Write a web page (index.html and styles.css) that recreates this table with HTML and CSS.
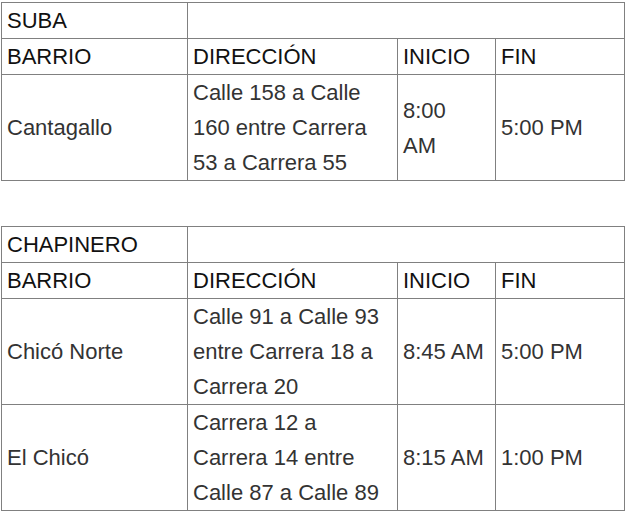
FILE: index.html
```html
<!DOCTYPE html>
<html lang="es">
<head>
<meta charset="utf-8">
<title>Horarios</title>
<link rel="stylesheet" href="styles.css">
</head>
<body>
<div class="page">
  <table class="sched">
    <colgroup><col class="c1"><col class="c2"><col class="c3"><col class="c4"></colgroup>
    <tr class="head"><td>SUBA</td><td colspan="3"></td></tr>
    <tr class="head"><td>BARRIO</td><td>DIRECCIÓN</td><td>INICIO</td><td>FIN</td></tr>
    <tr><td>Cantagallo</td><td>Calle 158 a Calle<br>160 entre Carrera<br>53 a Carrera 55</td><td>8:00<br>AM</td><td>5:00 PM</td></tr>
  </table>
  <table class="sched">
    <colgroup><col class="c1"><col class="c2"><col class="c3"><col class="c4"></colgroup>
    <tr class="head"><td>CHAPINERO</td><td colspan="3"></td></tr>
    <tr class="head"><td>BARRIO</td><td>DIRECCIÓN</td><td>INICIO</td><td>FIN</td></tr>
    <tr><td>Chicó Norte</td><td>Calle 91 a Calle 93<br>entre Carrera 18 a<br>Carrera 20</td><td>8:45 AM</td><td>5:00 PM</td></tr>
    <tr><td>El Chicó</td><td>Carrera 12 a<br>Carrera 14 entre<br>Calle 87 a Calle 89</td><td>8:15 AM</td><td>1:00 PM</td></tr>
  </table>
</div>
</body>
</html>
```
FILE: styles.css
```css
html, body {
  margin: 0;
  padding: 0;
  background: #fff;
}
.page {
  padding: 2px 0 0 1px;
  display: flex;
  flex-direction: column;
  gap: 45px;
  align-items: flex-start;
}
.sched {
  border-collapse: collapse;
  table-layout: fixed;
  width: 624px;
  font-family: "Liberation Sans", Arial, sans-serif;
  font-size: 22px;
  line-height: 35px;
  color: #333;
}
.sched td {
  border: 1px solid #808080;
  padding: 0 5px;
  vertical-align: middle;
  white-space: nowrap;
}
.sched .head td {
  color: #111;
}
.c1 { width: 186px; }
.c2 { width: 210px; }
.c3 { width: 98px; }
.c4 { width: 129px; }
```
